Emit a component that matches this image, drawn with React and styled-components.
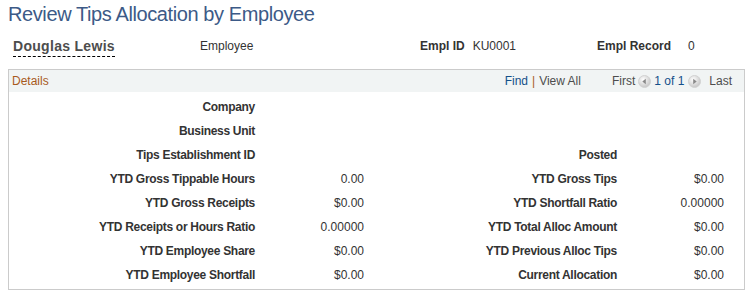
import React from "react";
import styled, { createGlobalStyle } from "styled-components";

const Global = createGlobalStyle`
  html, body { margin: 0; padding: 0; background: #fff; }
  body { font-family: "Liberation Sans", Arial, sans-serif; color: #333; }
`;

const Page = styled.div`
  padding: 0 7px 0 8px;
  width: 737px;
`;

const Title = styled.h1`
  margin: 0;
  padding-top: 2px;
  height: 28px;
  font-size: 20px;
  font-weight: normal;
  letter-spacing: -0.4px;
  line-height: 24px;
  color: #3c5a87;
`;

const KeyBar = styled.div`
  display: grid;
  grid-template-columns: 192px 220px 177px auto;
  align-items: start;
  height: 39px;
  font-size: 12px;
`;

const Name = styled.span`
  justify-self: start;
  margin-left: 5px;
  margin-top: 8px;
  font-size: 14px;
  font-weight: bold;
  letter-spacing: 0.3px;
  color: #4d4d4d;
  line-height: 16px;
  padding-bottom: 2px;
  border-bottom: 1px dashed #000;
`;

const KeyCell = styled.span`
  margin-top: 9px;
  line-height: 14px;
  display: flex;
  gap: ${(p) => p.$gap || 8}px;
`;

const KeyLabel = styled.b`
  color: #333;
`;

const Box = styled.section`
  border: 1px solid #cbcbcb;
  box-sizing: border-box;
  height: 221px;
`;

const Band = styled.div`
  display: flex;
  align-items: center;
  height: 22px;
  background: #f1f4f4;
  padding: 0 12px 0 3px;
  font-size: 12px;
`;

const BandTitle = styled.span`
  color: #a85a1d;
  flex: 1;
`;

const Link = styled.span`
  color: #14508a;
`;

const Plain = styled.span`
  color: #4d4d4d;
`;

const Sep = styled.span`
  color: #a85a1d;
  margin: 0 4px;
`;

const Nav = styled.span`
  display: flex;
  align-items: center;
  margin-left: 31px;
`;

const ArrowBox = styled.span`
  display: inline-flex;
  margin: 0 ${(p) => p.$r}px 0 ${(p) => p.$l}px;
`;

const Grid = styled.div`
  display: grid;
  grid-template-columns: 246px 109px 253px 107px;
  grid-auto-rows: 24px;
  padding-top: 3px;
  font-size: 12px;
  align-items: center;
`;

const Label = styled.span`
  font-weight: bold;
  letter-spacing: -0.3px;
  text-align: right;
  color: #333;
`;

const Value = styled.span`
  text-align: right;
  color: #333;
`;

const Arrow = ({ dir }) => (
  <svg width="13" height="13" viewBox="0 0 13 13">
    <defs>
      <radialGradient id={"g" + dir} cx="40%" cy="35%" r="70%">
        <stop offset="0%" stopColor="#ffffff" />
        <stop offset="100%" stopColor="#c2c2c2" />
      </radialGradient>
    </defs>
    <circle cx="6.5" cy="6.5" r="6" fill={"url(#g" + dir + ")"} stroke="#d2d2d2" />
    {dir === "l" ? (
      <path d="M4.3 6.5 L7.8 3.8 L7.8 9.2 Z" fill="#8a8a8a" />
    ) : (
      <path d="M8.7 6.5 L5.2 3.8 L5.2 9.2 Z" fill="#8a8a8a" />
    )}
  </svg>
);

const rows = [
  ["Company", "", "", ""],
  ["Business Unit", "", "", ""],
  ["Tips Establishment ID", "", "Posted", ""],
  ["YTD Gross Tippable Hours", "0.00", "YTD Gross Tips", "$0.00"],
  ["YTD Gross Receipts", "$0.00", "YTD Shortfall Ratio", "0.00000"],
  ["YTD Receipts or Hours Ratio", "0.00000", "YTD Total Alloc Amount", "$0.00"],
  ["YTD Employee Share", "$0.00", "YTD Previous Alloc Tips", "$0.00"],
  ["YTD Employee Shortfall", "$0.00", "Current Allocation", "$0.00"],
];

export default function App() {
  return (
    <Page>
      <Global />
      <Title>Review Tips Allocation by Employee</Title>
      <KeyBar>
        <Name>Douglas Lewis</Name>
        <KeyCell>Employee</KeyCell>
        <KeyCell $gap={8}>
          <KeyLabel>Empl ID</KeyLabel>
          <span>KU0001</span>
        </KeyCell>
        <KeyCell $gap={17}>
          <KeyLabel>Empl Record</KeyLabel>
          <span>0</span>
        </KeyCell>
      </KeyBar>
      <Box>
        <Band>
          <BandTitle>Details</BandTitle>
          <Link>Find</Link>
          <Sep>|</Sep>
          <Plain>View All</Plain>
          <Nav>
            <Plain>First</Plain>
            <ArrowBox $l={3} $r={3}>
              <Arrow dir="l" />
            </ArrowBox>
            <Link>1 of 1</Link>
            <ArrowBox $l={4} $r={8}>
              <Arrow dir="r" />
            </ArrowBox>
            <Plain>Last</Plain>
          </Nav>
        </Band>
        <Grid>
          {rows.map((r, i) => (
            <React.Fragment key={i}>
              <Label>{r[0]}</Label>
              <Value>{r[1]}</Value>
              <Label>{r[2]}</Label>
              <Value>{r[3]}</Value>
            </React.Fragment>
          ))}
        </Grid>
      </Box>
    </Page>
  );
}
